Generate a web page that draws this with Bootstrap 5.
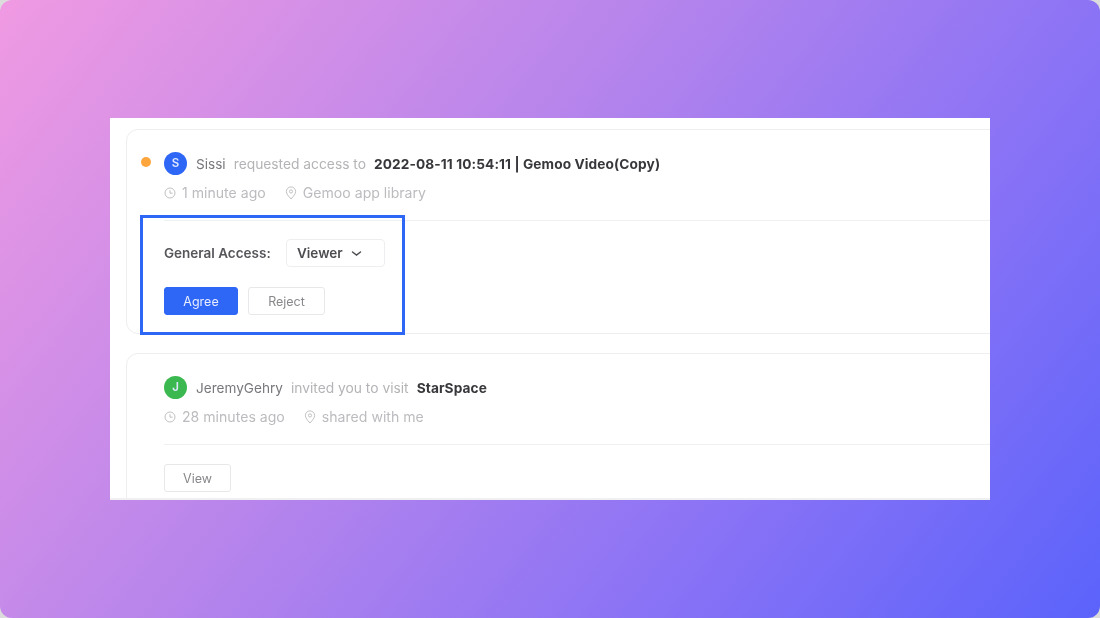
<!DOCTYPE html>
<html lang="en">
<head>
  <meta charset="UTF-8" />
  <meta name="viewport" content="width=device-width, initial-scale=1.0"/>
  <title>Gemoo notifications</title>
  <link href="https://cdn.jsdelivr.net/npm/bootstrap@5.3.0/dist/css/bootstrap.min.css" rel="stylesheet"/>
  <style>
    html, body {
      height: 100%;
      background-color: #dcdcdc;
    }
    body {
      font-family: Inter, "Liberation Sans", sans-serif;
      overflow: hidden;
    }
    .hero {
      width: 1100px;
      height: 618px;
      border-radius: 12px;
      background: linear-gradient(128deg, #f09ae2 0%, #b584ec 42%, #8872f6 72%, #5b63fb 100%);
    }
    .shot {
      width: 880px;
      height: 382px;
      background-color: #fff;
      padding: 11px 0 0 16px;
      overflow: hidden;
      position: relative;
      border-bottom: 2px solid #f0f0f2;
    }
    .notice {
      width: 900px;
      border: 1px solid #eeeef0;
      border-radius: 12px;
      padding: 22px 0 0 37px;
      position: relative;
      background-color: #fff;
    }
    .notice-one { height: 205px; margin-bottom: 19px; }
    .notice-two { height: 190px; }
    .unread {
      position: absolute;
      left: 14px;
      top: 27px;
      width: 10px;
      height: 10px;
      border-radius: 50%;
      background-color: #ffa53d;
    }
    .avatar {
      width: 23px;
      height: 23px;
      border-radius: 50%;
      color: #dfe8ff;
      font-size: 11.500px;
      font-weight: 600;
    }
    .avatar-blue { background-color: #2e66f6; }
    .avatar-green { background-color: #3bb950; }
    .headline {
      height: 23px;
      font-size: 13.800px;
      color: #b4b4b8;
    }
    .headline span:not(.avatar) { position: relative; top: 1px; }
    .who { color: #77777c; margin-left: 9px; margin-right: 8px; font-size: 13.600px; }
    .what {
      color: #38383c;
      font-weight: 700;
      margin-left: 8px;
      font-size: 13.700px;
      letter-spacing: .1px;
    }
    .meta {
      margin-top: 8px;
      height: 20px;
      font-size: 14.100px;
      color: #bcbcc0;
    }
    .meta svg { flex: none; }
    .meta-text { margin-left: 6px; }
    .meta-pin { margin-left: 19px; }
    .rule {
      height: 1px;
      background-color: #f0f0f2;
      margin: 17px 0 0 0;
    }
    .access-label {
      width: 122px;
      font-size: 13.500px;
      font-weight: 600;
      color: #55555a;
    }
    .picker {
      width: 99px;
      height: 28px;
      border: 1px solid #eeeef0;
      border-radius: 4px;
      padding-left: 10px;
      font-size: 13.500px;
      font-weight: 600;
      color: #4c4c50;
    }
    .act {
      height: 28px;
      padding: 2px 0 0;
      font-size: 12.500px;
      border-radius: 3px;
      line-height: 1;
    }
    .act-agree {
      width: 74px;
      background-color: #2e66f6;
      border: 1px solid #2e66f6;
      color: #e8eefe;
    }
    .act-plain {
      background-color: #fff;
      border: 1px solid #e8e8ea;
      color: #88888c;
    }
    .reject-btn { margin-left: 2px; width: 77px; }
    .view-btn { width: 67px; }
    .highlight {
      position: absolute;
      left: 30px;
      top: 97px;
      width: 265px;
      height: 120px;
      border: 3px solid #2e66f6;
      pointer-events: none;
    }
    .notice > * { filter: blur(.35px); }
    .access-row { margin-top: 18px; }
    .act-row { margin-top: 20px; }
    .view-row { margin-top: 19px; }
  </style>
</head>
<body class="m-0">
  <div class="hero d-flex align-items-center justify-content-center">
    <div class="shot">
      <div class="notice notice-one">
        <span class="unread"></span>
        <div class="headline d-flex align-items-center">
          <span class="avatar avatar-blue d-flex align-items-center justify-content-center">S</span>
          <span class="who">Sissi</span>
          <span>requested access to</span>
          <span class="what">2022-08-11 10:54:11 | Gemoo Video(Copy)</span>
        </div>
        <div class="meta d-flex align-items-center">
          <svg width="12" height="12" viewBox="0 0 13 13" fill="none" stroke="#bcbcc0" stroke-width="1"><circle cx="6.500" cy="6.500" r="5.400"/><path d="M6.500 3.400v3.300h2.800"/></svg>
          <span class="meta-text">1 minute ago</span>
          <svg class="meta-pin" width="12" height="14" viewBox="0 0 13 15" fill="none" stroke="#bcbcc0" stroke-width="1"><path d="M6.500 14C3.600 10.800 1.500 8.400 1.500 5.900a5 5 0 0 1 10 0c0 2.500-2.100 4.900-5 8.100z"/><circle cx="6.500" cy="5.800" r="1.700"/></svg>
          <span class="meta-text">Gemoo app library</span>
        </div>
        <div class="rule"></div>
        <div class="access-row d-flex align-items-center">
          <span class="access-label">General Access:</span>
          <div class="picker d-flex align-items-center">
            <span>Viewer</span>
            <svg class="ms-2" width="11" height="7" viewBox="0 0 11 7" fill="none" stroke="#4c4c50" stroke-width="1.500" stroke-linecap="round"><path d="M1.500 2l4 3 4-3"/></svg>
          </div>
        </div>
        <div class="act-row d-flex gap-2">
          <button class="btn act act-agree" type="button">Agree</button>
          <button class="btn act act-plain reject-btn" type="button">Reject</button>
        </div>
      </div>
      <div class="notice notice-two">
        <div class="headline d-flex align-items-center">
          <span class="avatar avatar-green d-flex align-items-center justify-content-center">J</span>
          <span class="who">JeremyGehry</span>
          <span>invited you to visit</span>
          <span class="what">StarSpace</span>
        </div>
        <div class="meta d-flex align-items-center">
          <svg width="12" height="12" viewBox="0 0 13 13" fill="none" stroke="#bcbcc0" stroke-width="1"><circle cx="6.500" cy="6.500" r="5.400"/><path d="M6.500 3.400v3.300h2.800"/></svg>
          <span class="meta-text">28 minutes ago</span>
          <svg class="meta-pin" width="12" height="14" viewBox="0 0 13 15" fill="none" stroke="#bcbcc0" stroke-width="1"><path d="M6.500 14C3.600 10.800 1.500 8.400 1.500 5.900a5 5 0 0 1 10 0c0 2.500-2.100 4.900-5 8.100z"/><circle cx="6.500" cy="5.800" r="1.700"/></svg>
          <span class="meta-text">shared with me</span>
        </div>
        <div class="rule"></div>
        <div class="view-row d-flex">
          <button class="btn act act-plain view-btn" type="button">View</button>
        </div>
      </div>
      <div class="highlight"></div>
    </div>
  </div>
  <script src="https://cdn.jsdelivr.net/npm/bootstrap@5.3.0/dist/js/bootstrap.bundle.min.js"></script>
</body>
</html>
